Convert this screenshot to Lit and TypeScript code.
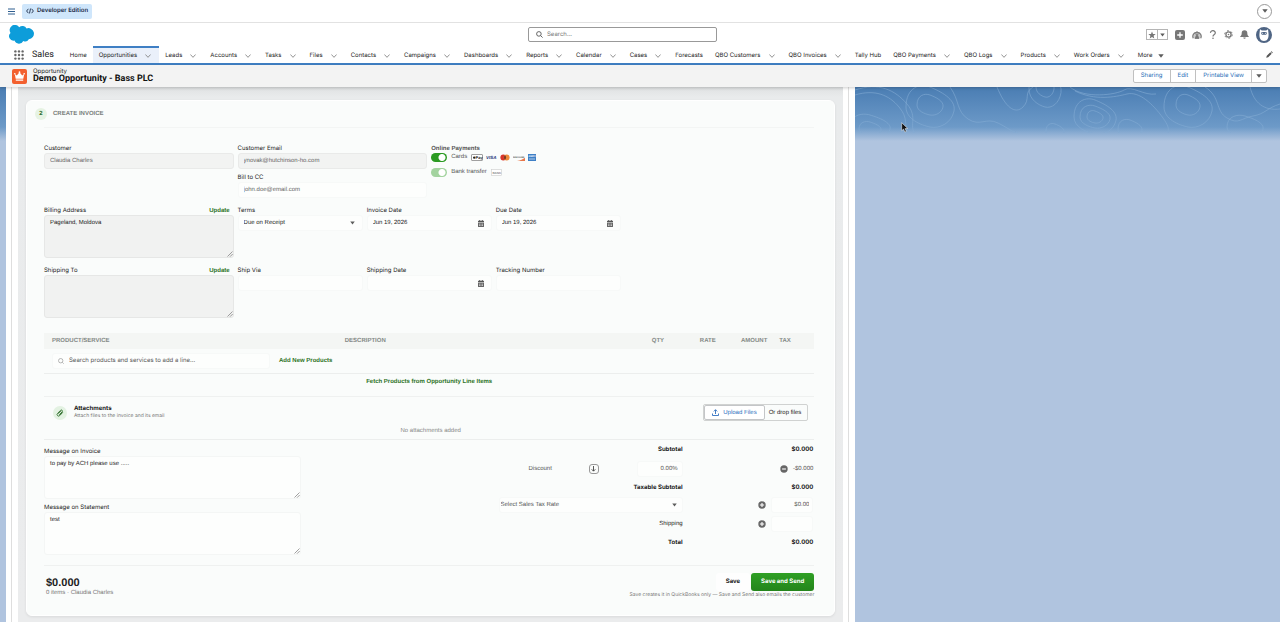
import { LitElement, html, css, svg } from "lit";
import { customElement } from "lit/decorators.js";
import { classMap } from "lit/directives/class-map.js";

const TABS: { name: string; menu?: boolean; active?: boolean }[] = [
  { name: "Home" },
  { name: "Opportunities", menu: true, active: true },
  { name: "Leads", menu: true },
  { name: "Accounts", menu: true },
  { name: "Tasks", menu: true },
  { name: "Files", menu: true },
  { name: "Contacts", menu: true },
  { name: "Campaigns", menu: true },
  { name: "Dashboards", menu: true },
  { name: "Reports", menu: true },
  { name: "Calendar", menu: true },
  { name: "Cases", menu: true },
  { name: "Forecasts" },
  { name: "QBO Customers", menu: true },
  { name: "QBO Invoices", menu: true },
  { name: "Tally Hub" },
  { name: "QBO Payments", menu: true },
  { name: "QBO Logs", menu: true },
  { name: "Products", menu: true },
  { name: "Work Orders", menu: true },
];

const base = css`
  *,
  *::before,
  *::after {
    box-sizing: border-box;
  }
  :host {
    text-rendering: geometricPrecision;
  }
  svg {
    display: block;
    flex: none;
  }
  button,
  input,
  select,
  textarea {
    font: inherit;
    color: inherit;
    text-rendering: inherit;
    margin: 0;
    padding: 0;
    border: 0;
    background: none;
    outline: none;
    min-width: 0;
  }
  button {
    cursor: pointer;
    white-space: nowrap;
  }
  a {
    color: inherit;
    text-decoration: none;
  }
`;

const caret = (w = 6) => html`<svg width=${w} height="4" viewBox="0 0 6 4" aria-hidden="true"><path d="M0.3 0.2h5.4L3 3.8z" fill="#5c5c5c" /></svg>`;

const calendar = html`<svg width="6" height="7" viewBox="0 0 12 14" aria-hidden="true">
  <path d="M2.5 0h1.8v1.5h3.4V0h1.8v1.5H11a1 1 0 0 1 1 1V4H0V2.500a1 1 0 0 1 1-1h1.500z" fill="#555" />
  <path d="M0 5.200h12V13a1 1 0 0 1-1 1H1a1 1 0 0 1-1-1z" fill="#666" />
  <path d="M2 7.500h2v1.500H2zM5 7.500h2v1.500H5zM8 7.500h2v1.500H8zM2 10.500h2V12H2zM5 10.500h2V12H5zM8 10.500h2V12H8z" fill="#ddd" />
</svg>`;

const grip = html`<svg class="grip" width="6" height="6" viewBox="0 0 6 6" aria-hidden="true"><path d="M0.500 5.500l5-5M3 5.700l2.700-2.700" stroke="#777" stroke-width="0.700" /></svg>`;

const plus = html`<svg width="8" height="8" viewBox="0 0 8 8" aria-hidden="true"><circle cx="4" cy="4" r="3.700" fill="#666" /><path d="M4 1.900v4.200M1.900 4h4.200" stroke="#fff" stroke-width="1.100" /></svg>`;
const minus = html`<svg width="8" height="8" viewBox="0 0 8 8" aria-hidden="true"><circle cx="4" cy="4" r="3.700" fill="#666" /><path d="M2.100 4h3.800" stroke="#fff" stroke-width="1.100" /></svg>`;

@customElement("app-chrome")
class AppChrome extends LitElement {
  static styles = [
    base,
    css`
      :host {
        display: block;
        background: #fff;
        color: #222;
        font: 6px/10px Inter, sans-serif;
      }
      .top {
        height: 23px;
        display: flex;
        align-items: center;
        gap: 7px;
        padding: 0 8px;
        border-bottom: 1px solid #e2e2e2;
      }
      .edition {
        height: 15px;
        display: flex;
        align-items: center;
        gap: 3px;
        padding: 0 4px;
        border-radius: 2px;
        background: #cfe6fb;
        color: #1c2b48;
        font-weight: 600;
      }
      .round {
        width: 15px;
        height: 15px;
        display: grid;
        place-items: center;
        margin-left: auto;
        border: 1px solid #999;
        border-radius: 50%;
      }
      .bar {
        height: 23px;
        display: grid;
        grid-template-columns: 520fr 189fr 555fr;
        align-items: center;
        padding: 0 8px;
      }
      .search {
        height: 15px;
        display: flex;
        align-items: center;
        gap: 4px;
        padding: 0 7px;
        border: 1px solid #999;
        border-radius: 2px;
      }
      .search input {
        flex: 1;
      }
      .search input::placeholder {
        color: #777;
        opacity: 1;
      }
      .tools {
        display: flex;
        justify-content: flex-end;
        align-items: center;
        gap: 7px;
      }
      .fav {
        display: flex;
        height: 11px;
        border: 1px solid #b5b5b5;
      }
      .fav button {
        width: 10px;
        display: grid;
        place-items: center;
      }
      .fav button + button {
        border-left: 1px solid #b5b5b5;
      }
      .nav {
        height: 19px;
        display: flex;
        align-items: stretch;
        border-bottom: 2px solid #3f7fc4;
        white-space: nowrap;
      }
      .launcher {
        display: flex;
        align-items: center;
        gap: 8px;
        padding: 1px 10px 0 14px;
        font: 9px/10px Roboto, sans-serif;
      }
      .tab {
        display: flex;
        align-items: center;
        gap: 8px;
        padding: 0 6px;
        border-top: 2px solid transparent;
      }
      .tab.menu {
        padding-right: 8px;
      }
      .tab.active {
        border-top-color: #3f7fc4;
        background: #eaf0fa;
      }
      .tab.more {
        gap: 6px;
      }
      .pencil {
        margin-left: auto;
        padding-right: 7px;
        display: grid;
        place-items: center;
      }
      .record {
        height: 22px;
        display: flex;
        align-items: center;
        gap: 6px;
        padding: 0 13px 0 12px;
        background: #f3f3f3;
        box-shadow: 0 1px 3px rgba(0, 0, 0, 0.2);
      }
      .kind {
        line-height: 7px;
      }
      .titles h1 {
        margin: 0;
        font: 700 9px/9px Roboto, sans-serif;
        color: #111;
      }
      .actions {
        display: flex;
        height: 14px;
        margin-left: auto;
        background: #fff;
        border: 1px solid #c0c0c0;
        border-radius: 2px;
        color: #2b6fb8;
      }
      .actions button {
        padding: 0 7px;
      }
      .actions button + button {
        border-left: 1px solid #c0c0c0;
      }
      .actions .arrow {
        padding: 0 4px;
      }
    `,
  ];

  render() {
    return html`
      <div class="top">
        <svg width="7" height="7" viewBox="0 0 7 7"><path d="M0 1h7M0 3.500h7M0 6h7" stroke="#2f5f90" /></svg>
        <div class="edition">
          <svg width="8" height="6" viewBox="0 0 8 6" fill="none" stroke="#1c2b48" stroke-width="0.900"><path d="M2.400 0.800L0.600 3l1.800 2.200M5.600 0.800L7.400 3 5.600 5.200M4.500 0.600l-1 4.800" /></svg>
          Developer Edition
        </div>
        <button class="round" aria-label="Show more">${caret()}</button>
      </div>
      <div class="bar">
        <svg width="27" height="19" viewBox="0 0 27 19" fill="#0d9dda">
          <path d="M11.200 2.200A4.800 4.800 0 0 1 18.600 3.400 5.600 5.600 0 1 1 20.800 14.300 4.200 4.200 0 0 1 15.300 16 4.800 4.800 0 0 1 6.500 15.600 4.500 4.500 0 0 1 2.500 7.900 5.200 5.200 0 0 1 11.200 2.200z" />
        </svg>
        <label class="search">
          <svg width="7" height="7" viewBox="0 0 7 7" fill="none" stroke="#555" stroke-width="0.900"><circle cx="2.900" cy="2.900" r="2.300" /><path d="M4.600 4.600l2 2" /></svg>
          <input type="search" placeholder="Search..." aria-label="Search" />
        </label>
        <div class="tools">
          <div class="fav">
            <button aria-label="Favorite"><svg width="8" height="8" viewBox="0 0 8 8"><path d="M4 0.400l1 2.600 2.700 0.100-2.100 1.700 0.700 2.700L4 6 1.700 7.500l0.700-2.700L0.300 3.100 3 3z" fill="#777" /></svg></button>
            <button aria-label="Favorites list">${caret(5)}</button>
          </div>
          <svg width="10" height="10" viewBox="0 0 10 10"><rect width="10" height="10" rx="2" fill="#777" /><path d="M5 2.200v5.600M2.200 5h5.600" stroke="#fff" stroke-width="1.300" /></svg>
          <svg width="10" height="9" viewBox="0 0 10 9"><path d="M1.200 8.200A4.200 4.200 0 1 1 8.800 8.200" fill="#ccc" stroke="#777" stroke-width="1.100" /><path d="M5 1v3M2.500 2.700l1.600 2M7.500 2.700l-1.600 2M3 8.500L5 4l2 4.500z" stroke="#777" stroke-width="0.800" fill="#777" /></svg>
          <svg width="8" height="9" viewBox="0 0 8 9"><path d="M1.500 2.900a2.400 2.200 0 1 1 3.800 1.700C4.300 5.200 4 5.500 4 6.500" fill="none" stroke="#777" stroke-width="1.200" /><circle cx="4" cy="8.200" r="0.800" fill="#777" /></svg>
          <svg width="9" height="9" viewBox="0 0 9 9" fill="none" stroke="#777"><circle cx="4.500" cy="4.500" r="2.600" stroke-width="1.300" /><circle cx="4.500" cy="4.500" r="3.800" stroke-width="1" stroke-dasharray="1.900 2.080" /><circle cx="4.500" cy="4.500" r="0.800" fill="#777" stroke="none" /></svg>
          <svg width="9" height="9" viewBox="0 0 9 9" fill="#777"><path d="M4.500 0.200a2.800 2.800 0 0 1 2.800 2.900c0 1.800 0.400 2.500 1.400 3.200v0.600H0.300v-0.600C1.300 5.600 1.700 4.900 1.700 3.100A2.800 2.800 0 0 1 4.500 0.200zM3.300 7.500h2.400a1.200 1.200 0 0 1-2.400 0z" /></svg>
          <svg width="16" height="16" viewBox="0 0 16 16"><circle cx="8" cy="8" r="8" fill="#4f6584" /><path d="M4 2.200L5.800 3.500h4.400L12 2.200l.4 3.300c.8 5-.9 8.500-4.400 8.500s-5.200-3.500-4.400-8.500z" fill="#fff" /><path d="M5.200 5.500c1-.7 4.600-.7 5.600 0 .2 1.200-.3 2-1 2.200H6.200c-.7-.2-1.200-1-1-2.200z" fill="#4f6584" /><circle cx="6.700" cy="6.500" r="0.500" fill="#fff" /><circle cx="9.300" cy="6.500" r="0.500" fill="#fff" /></svg>
        </div>
      </div>
      <nav class="nav">
        <div class="launcher">
          <svg width="10" height="10" viewBox="0 0 10 10" fill="#666">${[1.4, 5, 8.6].map((y) => [1.4, 5, 8.6].map((x) => svg`<circle cx=${x} cy=${y} r="1.2" />`))}</svg>
          <span>Sales</span>
        </div>
        ${TABS.map(
          (t) => html`<a href="#" class=${classMap({ tab: true, menu: !!t.menu, active: !!t.active })}>${t.name}${t.menu ? html`<svg width="6" height="4" viewBox="0 0 6 4"><path d="M0.400 0.500L3 3.300 5.600 0.500" fill="none" stroke="#777" stroke-width="0.800" /></svg>` : ""}</a>`
        )}
        <a href="#" class="tab more">More ${caret()}</a>
        <button class="pencil" aria-label="Edit navigation"><svg width="7" height="7" viewBox="0 0 7 7"><path d="M0.200 6.800l0.600-2L4.300 1.300l1.400 1.400L2.200 6.200zM4.800 0.800L5.500 0.200 6.800 1.500 6.200 2.200z" fill="#555" /></svg></button>
      </nav>
      <header class="record">
        <svg width="15" height="15" viewBox="0 0 15 15"><rect width="15" height="15" rx="2" fill="#f3602f" /><path d="M2.800 5l2 1.500L7.500 3.300l2.700 3.200 2-1.500-.9 4.700H3.700zM3.800 10.500h7.400v1.300H3.800z" fill="#fff" /><circle cx="2.800" cy="4.700" r="0.800" fill="#fff" /><circle cx="7.500" cy="3.200" r="0.900" fill="#fff" /><circle cx="12.200" cy="4.700" r="0.800" fill="#fff" /></svg>
        <div class="titles">
          <div class="kind">Opportunity</div>
          <h1>Demo Opportunity - Bass PLC</h1>
        </div>
        <div class="actions">
          <button>Sharing</button><button>Edit</button><button>Printable View</button><button class="arrow" aria-label="More actions">${caret()}</button>
        </div>
      </header>
    `;
  }
}

@customElement("invoice-form")
class InvoiceForm extends LitElement {
  static styles = [
    base,
    css`
      :host {
        display: block;
        padding: 7px 20px 16px 17px;
        border-radius: 6px;
        background: #fafcfb;
        border: 1px solid #fff;
        box-shadow: 0 1px 3px rgba(0, 0, 0, 0.08);
        color: #222;
        font: 6px/8px "Liberation Sans", sans-serif;
      }
      .step {
        display: flex;
        align-items: center;
        gap: 6px;
        height: 12px;
        margin-left: -9px;
        color: #7a807c;
        font-weight: 700;
      }
      .num {
        width: 12px;
        height: 12px;
        border-radius: 50%;
        background: #e6f3e3;
        color: #2c6b2a;
        text-align: center;
        line-height: 12px;
      }
      h2 {
        margin: 0;
        font: inherit;
      }
      .grid {
        display: grid;
        grid-template-columns: repeat(12, minmax(0, 1fr));
        column-gap: 4px;
        row-gap: 9px;
        margin-top: 7px;
        padding-top: 17px;
        border-top: 1px solid #f3f5f4;
      }
      .s3 {
        grid-column: span 3;
      }
      .s2 {
        grid-column: span 2;
      }
      .s6 {
        grid-column: span 6;
      }
      .newrow {
        grid-column: 1 / span 3;
      }
      .field label,
      .lab {
        display: flex;
        justify-content: space-between;
        height: 8px;
      }
      .field label,
      .line input {
        font: 6px/8px Inter, sans-serif;
      }
      .update {
        color: #2d7326;
        font-weight: 700;
        line-height: 8px;
        margin-right: 4px;
      }
      .stack {
        display: flex;
        flex-direction: column;
        gap: 5px;
      }
      .box {
        display: flex;
        align-items: center;
        height: 16px;
        padding: 0 7px 0 5px;
        border-radius: 3px;
        background: #fdfefd;
        border: 1px solid #f7f9f8;
      }
      .box input,
      .box select {
        flex: 1;
        appearance: none;
      }
      .box.off {
        background: #f2f3f2;
        border-color: #e9eae9;
        color: #666;
      }
      .box.soft {
        color: #666;
      }
      .area {
        position: relative;
        height: 43px;
      }
      .area textarea {
        display: block;
        width: 100%;
        height: 100%;
        padding: 3px 5px;
        border: 1px solid #f4f6f5;
        border-radius: 3px;
        resize: none;
        background: #fdfefd;
      }
      .area.off textarea {
        background: #f1f2f1;
        border-color: #e6e7e6;
      }
      .grip {
        position: absolute;
        right: 1px;
        bottom: 1px;
      }
      .paylab {
        font-weight: 700;
        color: #555;
      }
      .pay {
        display: flex;
        align-items: center;
        gap: 4px;
        height: 8px;
        color: #555;
      }
      .pay + .pay {
        margin-top: 7px;
      }
      .pay label {
        display: flex;
        align-items: center;
        gap: 4px;
      }
      .toggle {
        appearance: none;
        width: 16px;
        height: 9px;
        border-radius: 5px;
        background: radial-gradient(circle at 11px 50%, #fff 3px, #2b9a22 4px);
      }
      .toggle:disabled {
        background: radial-gradient(circle at 11px 50%, #fff 3px, #a3d39f 4px);
      }
      .brands {
        display: flex;
        align-items: center;
        gap: 3px;
      }
      table {
        width: 100%;
        margin-top: 15px;
        border-collapse: collapse;
        table-layout: fixed;
      }
      th {
        height: 16px;
        padding: 0 0 0 8px;
        background: #f4f6f4;
        color: #858a87;
        text-align: left;
        font-weight: 700;
      }
      th.num-col {
        text-align: right;
        padding: 0;
      }
      th.tax {
        padding-left: 12px;
      }
      td {
        height: 24px;
        padding: 0 8px;
        border-bottom: 1px solid #eceeed;
      }
      .line {
        display: flex;
        align-items: center;
      }
      .line .box {
        width: 218px;
        gap: 5px;
        padding: 0 5px;
      }
      .line .box input::placeholder {
        color: #555;
        opacity: 1;
      }
      .link {
        color: #2d7326;
        font-weight: 700;
      }
      .line .link {
        margin-left: 9px;
      }
      .fetch {
        height: 23px;
        display: flex;
        align-items: center;
        justify-content: center;
        padding-bottom: 5px;
        border-bottom: 1px solid #eff1f0;
      }
      .attach {
        border-bottom: 1px solid #eceeed;
        padding: 7px 6px 4px 9px;
      }
      .attach-head {
        height: 18px;
        display: flex;
        align-items: center;
        gap: 7px;
      }
      .clip {
        width: 14px;
        height: 14px;
        display: grid;
        place-items: center;
        border-radius: 50%;
        background: #e3f2e2;
      }
      .attach-head strong {
        display: block;
        color: #222;
        font: 700 6px/8px Inter, sans-serif;
      }
      .sub {
        color: #777;
        font: 5px/7px Inter, sans-serif;
      }
      .drop {
        height: 17px;
        display: flex;
        align-items: center;
        margin-left: auto;
        padding-right: 6px;
        border: 1px solid #d0d2d1;
        border-radius: 2px;
      }
      .upload {
        height: 15px;
        display: flex;
        align-items: center;
        gap: 4px;
        margin-right: 4px;
        padding: 0 7px;
        border: 1px solid #c4c6c8;
        border-radius: 2px;
        background: #fff;
        color: #2f6fc0;
      }
      .none {
        margin-top: 5px;
        height: 8px;
        text-align: center;
        color: #888;
      }
      .bottom {
        display: flex;
        justify-content: space-between;
        padding: 2px 0 10px;
        border-bottom: 1px solid #eff1f0;
      }
      .messages {
        width: 33.4%;
        padding-top: 6px;
      }
      .totals {
        width: 41%;
      }
      .row {
        display: grid;
        grid-template-columns: 183fr 70fr 61fr;
        align-items: center;
        text-align: right;
        height: 17px;
      }
      .row > :last-child {
        padding-right: 1px;
      }
      .row.tall {
        height: 21px;
      }
      .row.strong,
      .btns button {
        color: #222;
        font: 700 6px/8px Inter, sans-serif;
      }
      .discount {
        display: flex;
        align-items: center;
        padding-left: 30px;
        color: #555;
      }
      .discount .dir {
        width: 10px;
        height: 10px;
        display: grid;
        place-items: center;
        margin-left: 37px;
        border: 1px solid #999;
        border-radius: 3px;
      }
      .discount .box {
        width: 46px;
        margin-left: auto;
        padding-right: 4px;
        color: #555;
      }
      .discount .box input {
        text-align: right;
      }
      .neg {
        display: flex;
        align-items: center;
        justify-content: flex-end;
        gap: 5px;
        color: #555;
      }
      .box.rate {
        padding: 0 5px 0 1px;
        color: #555;
      }
      .amt {
        width: 42px;
        padding-right: 3px;
        color: #555;
      }
      .row .amt input {
        text-align: right;
        width: 100%;
      }
      .foot {
        display: flex;
        justify-content: space-between;
        padding: 7px 0 0 2px;
      }
      .sum {
        padding-top: 4px;
        color: #777;
      }
      .sum strong {
        display: block;
        color: #222;
        font: 700 11px/12px "Liberation Sans", sans-serif;
      }
      .end {
        display: flex;
        flex-direction: column;
        align-items: flex-end;
        gap: 1px;
      }
      .btns {
        display: flex;
        gap: 1px;
      }
      .btns button {
        height: 18px;
        padding: 0 10px;
        border-radius: 3px;
      }
      .btns .plain {
        background: #fefefe;
      }
      .btns .primary {
        background: linear-gradient(#2fa024, #24851b);
        color: #fff;
      }
    `,
  ];

  private date(id: string, label: string, value: string) {
    return html`<div class="field s2">
      <label for=${id}>${label}</label>
      <div class="box"><input id=${id} .value=${value} />${calendar}</div>
    </div>`;
  }

  private area(id: string, value: string, off: boolean) {
    return html`<div class=${classMap({ area: true, off })}><textarea id=${id} .value=${value}></textarea>${grip}</div>`;
  }

  render() {
    return html`
      <div class="step"><span class="num">2</span><h2>CREATE INVOICE</h2></div>
      <div class="grid">
        <div class="s3 field">
          <label for="cust">Customer</label>
          <div class="box off"><input id="cust" value="Claudia Charles" readonly /></div>
        </div>
        <div class="s3 stack">
          <div class="field">
            <label for="email">Customer Email</label>
            <div class="box off"><input id="email" value="ynovak@hutchinson-ho.com" readonly /></div>
          </div>
          <div class="field">
            <label for="cc">Bill to CC</label>
            <div class="box soft"><input id="cc" value="john.doe@email.com" /></div>
          </div>
        </div>
        <div class="s6">
          <div class="lab paylab">Online Payments</div>
          <div class="pay">
            <label><input class="toggle" type="checkbox" checked />Cards</label>
            <div class="brands">
              <svg width="12" height="7" viewBox="0 0 12 7"><rect x="0.500" y="0.500" width="11" height="6" rx="0.500" fill="#fff" stroke="#888" stroke-width="0.800" /><circle cx="3.200" cy="3.600" r="1.200" fill="#222" /><text x="4.600" y="4.900" font-family="Liberation Sans" font-size="4" font-weight="700" fill="#222">Pay</text></svg>
              <svg width="11" height="7" viewBox="0 0 11 7"><text x="0" y="5.300" font-family="Liberation Sans" font-size="4.500" font-weight="700" font-style="italic" fill="#1c3278">VISA</text></svg>
              <svg width="10" height="7" viewBox="0 0 10 7"><circle cx="3.300" cy="3.500" r="2.900" fill="#d8352a" /><circle cx="6.700" cy="3.500" r="2.900" fill="#ee8a3a" /><path d="M5 1.200a2.900 2.900 0 0 1 0 4.600 2.900 2.900 0 0 1 0-4.600z" fill="#7a3a28" /></svg>
              <svg width="12" height="7" viewBox="0 0 12 7"><text x="0" y="4" font-family="Liberation Sans" font-size="2.200" font-weight="700" fill="#444">DISCOVER</text><path d="M12 3.800V7H4c3.500-.5 6-1.600 8-3.200z" fill="#e8774a" /></svg>
              <svg width="8" height="7" viewBox="0 0 8 7"><rect width="8" height="7" fill="#3d7fc6" /><text x="0.600" y="3.300" font-family="Liberation Sans" font-size="2.400" font-weight="700" fill="#fff">AMEX</text><path d="M1 5h6" stroke="#cfe0f3" stroke-width="0.800" /></svg>
            </div>
          </div>
          <div class="pay">
            <label><input class="toggle" type="checkbox" checked disabled />Bank transfer</label>
            <svg width="11" height="7" viewBox="0 0 11 7"><rect x="0.500" y="0.500" width="10" height="6" fill="#fff" stroke="#ccc" stroke-width="0.600" /><text x="1.400" y="4.500" font-family="Liberation Sans" font-size="3" font-weight="700" fill="#888">BANK</text></svg>
          </div>
        </div>

        <div class="newrow field">
          <div class="lab"><label for="bill">Billing Address</label><button class="update">Update</button></div>
          ${this.area("bill", "Pageland, Moldova", true)}
        </div>
        <div class="field s2">
          <label for="terms">Terms</label>
          <div class="box"><select id="terms"><option>Due on Receipt</option></select>${caret(5)}</div>
        </div>
        ${this.date("inv", "Invoice Date", "Jun 19, 2026")} ${this.date("due", "Due Date", "Jun 19, 2026")}

        <div class="newrow field">
          <div class="lab"><label for="ship">Shipping To</label><button class="update">Update</button></div>
          ${this.area("ship", "", true)}
        </div>
        <div class="field s2">
          <label for="via">Ship Via</label>
          <div class="box"><input id="via" /></div>
        </div>
        ${this.date("shipdate", "Shipping Date", "")}
        <div class="field s2">
          <label for="track">Tracking Number</label>
          <div class="box"><input id="track" /></div>
        </div>
      </div>

      <table>
        <colgroup>
          <col width="38%" />
          <col width="37%" />
          <col width="5.5%" />
          <col width="6.7%" />
          <col width="6.7%" />
          <col />
        </colgroup>
        <thead>
          <tr>
            <th>PRODUCT/SERVICE</th>
            <th>DESCRIPTION</th>
            <th class="num-col">QTY</th>
            <th class="num-col">RATE</th>
            <th class="num-col">AMOUNT</th>
            <th class="tax">TAX</th>
          </tr>
        </thead>
        <tbody>
          <tr>
            <td colspan="6">
              <div class="line">
                <label class="box">
                  <svg width="6" height="6" viewBox="0 0 6 6" fill="none" stroke="#999" stroke-width="0.700"><circle cx="2.700" cy="2.700" r="2.200" /><path d="M4.300 4.300l1.400 1.400" /></svg>
                  <input placeholder="Search products and services to add a line..." aria-label="Search products" />
                </label>
                <button class="link">Add New Products</button>
              </div>
            </td>
          </tr>
        </tbody>
      </table>
      <div class="fetch"><button class="link">Fetch Products from Opportunity Line Items</button></div>

      <section class="attach">
        <div class="attach-head">
          <span class="clip"><svg width="8" height="8" viewBox="0 0 8 8" fill="none" stroke="#3f7b3c" stroke-width="1"><path d="M6.800 3.300L3.700 6.600a1.500 1.500 0 0 1-2.200-2.100L4.600 1.300a1.100 1.100 0 0 1 1.600 1.500L3.300 5.700M6 3.800L3.500 6.300M2 4.800L5 1.800" /></svg></span>
          <div><strong>Attachments</strong><div class="sub">Attach files to the invoice and its email</div></div>
          <div class="drop">
            <button class="upload"><svg width="7" height="7" viewBox="0 0 7 7" fill="none" stroke="#2f6fc0" stroke-width="0.900"><path d="M3.500 5V0.800M1.800 2.400l1.700-1.700 1.700 1.700M0.500 4.500v2h6v-2" /></svg>Upload Files</button>
            <span>Or drop files</span>
          </div>
        </div>
        <div class="none">No attachments added</div>
      </section>

      <div class="bottom">
        <div class="messages stack">
          <div class="field"><label for="m1">Message on Invoice</label>${this.area("m1", "to pay by ACH please use .....", false)}</div>
          <div class="field"><label for="m2">Message on Statement</label>${this.area("m2", "test", false)}</div>
        </div>
        <div class="totals">
          <div class="row strong"><span>Subtotal</span><span></span><span>$0.000</span></div>
          <div class="row tall">
            <div class="discount">
              <span>Discount</span>
              <button class="dir" aria-label="Discount position"><svg width="5" height="6" viewBox="0 0 5 6"><path d="M2.500 0v5M0.700 3.300l1.800 1.900 1.800-1.900" fill="none" stroke="#444" stroke-width="0.900" /></svg></button>
              <div class="box"><input value="0.00%" aria-label="Discount percent" /></div>
            </div>
            <span></span>
            <div class="neg">${minus}<span>-$0.000</span></div>
          </div>
          <div class="row strong"><span>Taxable Subtotal</span><span></span><span>$0.000</span></div>
          <div class="row">
            <div class="box rate"><select aria-label="Sales tax rate"><option>Select Sales Tax Rate</option></select>${caret(5)}</div>
            <span></span>
            <div class="neg"><button aria-label="Add tax">${plus}</button><div class="box amt"><input value="$0.00" aria-label="Tax amount" /></div></div>
          </div>
          <div class="row tall">
            <span>Shipping</span>
            <span></span>
            <div class="neg"><button aria-label="Add shipping">${plus}</button><div class="box amt"><input aria-label="Shipping amount" /></div></div>
          </div>
          <div class="row strong"><span>Total</span><span></span><span>$0.000</span></div>
        </div>
      </div>

      <div class="foot">
        <div class="sum"><strong>$0.000</strong>0 items · Claudia Charles</div>
        <div class="end">
          <div class="btns"><button class="plain">Save</button><button class="primary">Save and Send</button></div>
          <div class="sub">Save creates it in QuickBooks only — Save and Send also emails the customer</div>
        </div>
      </div>
    `;
  }
}

@customElement("app-root")
class AppRoot extends LitElement {
  static styles = [
    base,
    css`
      :host {
        display: flex;
        flex-direction: column;
        min-height: 100vh;
        background: #b0c4df;
      }
      app-chrome {
        position: relative;
        z-index: 1;
      }
      .stage {
        position: relative;
        flex: 1;
        display: grid;
        grid-template-columns: 2fr 1fr;
        padding-left: 6px;
        background: linear-gradient(#4a7db3, #6d9ac8 40px, #b0c4df 54px);
      }
      .topo {
        position: absolute;
        inset: 0 0 auto auto;
      }
      .panel {
        position: relative;
        padding: 0 6px 0 5px;
        background: #fff;
      }
      .inner {
        height: 100%;
        padding: 0 5px 0 6px;
        border: solid #dedede;
        border-width: 0 1px;
      }
      .canvas {
        height: 100%;
        padding: 13px 8px 6px;
        background: linear-gradient(#dfe1e2, #e9ebec 10px, #ebeced);
      }
      .cursor {
        position: fixed;
        left: 901px;
        top: 122px;
      }
    `,
  ];

  render() {
    const rings = [
      [75, 18, 13, 10],
      [75, 20, 24, 20],
      [240, 30, 8, 6],
      [240, 30, 15, 11],
      [240, 30, 21, 17],
      [333, 18, 12, 10],
      [333, 20, 24, 20],
      [190, 2, 16, 18],
      [190, 0, 9, 10],
      [15, 40, 20, 12],
      [15, 42, 11, 7],
      [200, 44, 9, 7],
      [275, 42, 12, 9],
      [390, 40, 18, 11],
    ];
    return html`
      <app-chrome></app-chrome>
      <div class="stage">
        <svg class="topo" width="425" height="46" viewBox="0 0 425 46" fill="none" stroke="#84acd4" stroke-opacity="0.600" stroke-width="1">
          ${rings.map(([x, y, a, b]) => svg`<path d=${`M${x - a} ${y}C${x - a} ${y - b} ${x - a * 0.4} ${y - b * 1.2} ${x} ${y - b}S${x + a * 1.1} ${y - b * 0.4} ${x + a} ${y + b * 0.2}S${x + a * 0.4} ${y + b * 1.1} ${x} ${y + b}S${x - a} ${y + b * 0.6} ${x - a} ${y}z`} />`)}
          <path d="M0 8c20-6 34 0 44 12s4 16 10 30M0 3c24-8 40 0 52 14s0 22 10 33M95 0c10 14 6 24 18 32s18-2 30 4 12 8 20 10M142 0c8 20 18 28 26 20s0-14 10-20M215 0c14 12 46 8 54 3s20 6 32 4M220 4c20 10 40 6 52 3s26 10 36 24 2 12 6 19M350 0c16 10 10 24 22 31s14 0 26-2 14-8 27-12M395 0c4 16 14 24 30 22" />
        </svg>
        <main class="panel"><div class="inner"><div class="canvas"><invoice-form></invoice-form></div></div></main>
      </div>
      <svg class="cursor" width="8" height="11" viewBox="0 0 8 11"><path d="M0.700 0.700v8l1.900-1.600 1.200 2.900 1.500-.6-1.200-2.800 2.600-.1z" fill="#111" stroke="#fff" stroke-width="0.500" /></svg>
    `;
  }
}
